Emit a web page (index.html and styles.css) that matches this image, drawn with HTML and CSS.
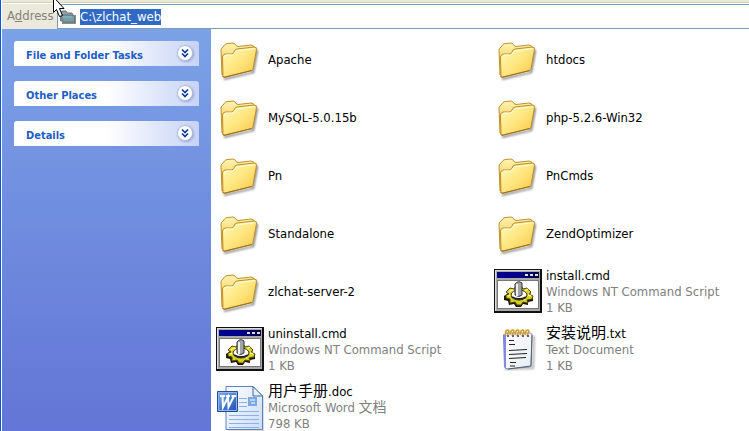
FILE: index.html
```html
<!DOCTYPE html>
<html lang="zh-CN">
<head>
<meta charset="utf-8">
<title>C:\zlchat_web</title>
<link rel="stylesheet" href="styles.css">
</head>
<body>
<svg class="defs" aria-hidden="true">
  <defs>
    <linearGradient id="g-front" x1="0" y1="0" x2="1" y2="1"><stop offset="0" stop-color="#fffbb8"/><stop offset=".5" stop-color="#ffe680"/><stop offset="1" stop-color="#f5c544"/></linearGradient>
    <linearGradient id="g-back" x1="0" y1="0" x2="0" y2="1"><stop offset="0" stop-color="#fff3ad"/><stop offset="1" stop-color="#e9bd45"/></linearGradient>
    <linearGradient id="g-word" x1="0" y1="0" x2="1" y2="1"><stop offset="0" stop-color="#7fb0f0"/><stop offset="1" stop-color="#1d4fb0"/></linearGradient>
    <linearGradient id="g-page" x1="0" y1="0" x2="1" y2="1"><stop offset="0" stop-color="#ffffff"/><stop offset="1" stop-color="#c9dcf5"/></linearGradient>
    <linearGradient id="g-note" x1="0" y1="0" x2="1" y2="1"><stop offset="0" stop-color="#ffffff"/><stop offset="1" stop-color="#e6edf2"/></linearGradient>
    <linearGradient id="g-title" x1="0" y1="0" x2="1" y2="0"><stop offset="0" stop-color="#00008c"/><stop offset=".55" stop-color="#000088"/><stop offset="1" stop-color="#00003c"/></linearGradient>
    <filter id="soft" x="-20%" y="-20%" width="140%" height="140%"><feGaussianBlur stdDeviation="1"/></filter>
  </defs>
  <symbol id="folder" viewBox="1 0 48 48">
    <path d="M9 44L39 37L43 15L41 12L37 36L9 42Z" fill="#444" opacity=".7" filter="url(#soft)"/>
    <path d="M7 39L6 14Q6 12 8 11L10 8.500Q11 7.500 13 7.500L18 7Q20 7 21 9.500L23 10.500L36 9Q39 9 39.500 12L38 32Z" fill="url(#g-back)" stroke="#c08f2c"/>
    <path d="M8 41L7.500 21Q7.500 19 10 18L17 18Q19 17 20 14L22 13L39 11Q42 11 41.500 13.500L38 33Q37.500 34 36.500 34.500L10 41Q8 41.500 8 40Z" fill="url(#g-front)" stroke="#bd8c26"/>
    <path d="M9 22Q9 20 11 19L18 19Q20 18 21 15L40 12.500" fill="none" stroke="#fffde0"/>
    <path d="M8.500 41.500L37 34.500" stroke="#9d7016"/>
  </symbol>
  <symbol id="cmd" viewBox="0 1 48 48">
    <path d="M0 2H48V46H0Z" fill="#111"/>
    <path d="M1 3H46V44H1Z" fill="#aaa"/>
    <path d="M1 3H46V4H2V44H1Z" fill="#ddd"/>
    <path d="M3 5H45V11H3Z" fill="url(#g-title)"/>
    <path d="M31 7h3v2h-3zM36 7h3v2h-3zM41 7h3v2h-3z" fill="#ddd"/>
    <path d="M3 13H45V42H3Z" fill="#777"/>
    <path d="M4 14H44V41H4Z" fill="#fff"/>
    <g transform="translate(0 -2)">
      <path d="M13 29l3-5 4 1 2-3h6l2 3 4-1 3 4-2 2 4 2v4l-5 1v3l-5-1-2 3h-5l-2-3-5 1-1-4-4-1v-4z" fill="#171700"/>
      <path d="M12 27l4-4 4 1 2-3h5l2 3 4-1 4 4-2 2 4 2-1 3-5 1 1 3-5-1-2 3h-4l-2-3-5 1v-4l-4-1v-3l3-1z" fill="#d8cf22" stroke="#514c00" stroke-width="1"/>
      <path d="M15 27l3-2 2 1M14 31l3-1M19 34l2-2M31 26l3-2M34 30l3 1M29 34l2 1" fill="none" stroke="#fff89a" stroke-width="1.500"/>
      <ellipse cx="25" cy="30" rx="8" ry="5" fill="#fff" stroke="#332f00"/>
      <path d="M21 19Q24 15 28 18V30Q25 33 21 30Z" fill="#a4a4a4" stroke="#333"/>
      <path d="M23 19V31" stroke="#eee" stroke-width="2"/>
      <path d="M18 32Q25 36 32 32" stroke="#222" stroke-width="2" fill="none"/>
    </g>
  </symbol>
  <symbol id="note" viewBox="1 0 48 48">
    <path d="M12 43L40 42L41 10" fill="none" stroke="#777" stroke-width="2" opacity=".6" filter="url(#soft)"/>
    <path d="M10 8L13 11V43L11 41Z" fill="#7278c8"/>
    <path d="M12 9Q12 7 14 7H37Q39 7 39 9L38 39Q38 41 36 41L15 43Q12 43 12 40Z" fill="url(#g-note)" stroke="#8890b4"/>
    <path d="M39 9L38 40L15 43" fill="none" stroke="#4f646c"/>
    <path d="M12 9V41" stroke="#8588dc" stroke-width="2"/>
    <path d="M12 9l1-4q2-2 3 0l-2 5M17 9l1-4q2-2 3 0l-2 5M22 9l1-4q2-2 3 0l-2 5M27 9l1-4q2-2 3 0l-2 5M32 9l1-4q2-2 3 0l-2 5" fill="none" stroke="#cf9b22" stroke-width="1.500"/>
    <path d="M14 10h2M19 10h2M24 10h2M29 10h2M34 10h2" stroke="#6a589a" stroke-width="2"/>
    <path d="M16 14.500H21M16 18.500H22M16 24.500L34 23.500M16 28.500L34 27.500M16 32.500L33 31.500M17 36.500H23M17 40H22" stroke="#222" stroke-width="1.200"/>
  </symbol>
  <symbol id="word" viewBox="0 0 48 48">
    <path d="M13 47H48V12" fill="none" stroke="#777" stroke-width="1" opacity=".5"/>
    <path d="M10 2.500H37L46.500 12V45.500H10Z" fill="url(#g-page)" stroke="#5b80c4"/>
    <path d="M37 2.500V12H46.500Z" fill="#e5f0ff" stroke="#4169ad"/>
    <path d="M13 31.500H43M13 35.500H43M13 39.500H43M13 43.500H43M23 14.500H31M23 18.500H31M23 22.500H31M23 27.500H43" stroke="#8eb0e2"/>
    <path d="M32 13H41V22H32Z" fill="#7ba9e6"/><path d="M34 15h5v2h-5zM35 18h4v2h-4z" fill="#bad4f6"/>
    <path d="M1.500 7.500H21.500V27.500H1.500Z" fill="url(#g-word)" stroke="#244c9b"/>
    <path d="M2.500 8.500H20.500V26.500H2.500Z" fill="none" stroke="#8fb6ef"/>
    <path d="M4 12H9M6.500 12L7 23L12 13L12.500 23L18 12M10 12H14M15.500 12H20" fill="none" stroke="#fff" stroke-width="2"/>
  </symbol>
  <symbol id="chevrons" viewBox="0 0 20 20">
    <circle cx="11" cy="11" r="8" fill="#7885b8" opacity=".6" filter="url(#soft)"/>
    <circle cx="10" cy="10" r="7.500" fill="#fff" stroke="#b4bcdf"/>
    <path d="M7 6.500L10 9.500L13 6.500M7 10.500L10 13.500L13 10.500" fill="none" stroke="#0c3b9c" stroke-width="1.700"/>
  </symbol>
</svg>

<div class="toolbar-edge"></div>
<header class="address-bar">
  <label class="address-label" for="address">A<u>d</u>dress</label>
  <div class="address-field">
    <svg class="address-icon" viewBox="0 0 16 16" aria-hidden="true">
      <path d="M2 14H15V6" fill="none" stroke="#666" stroke-width="1.500"/>
      <path d="M.5 12V4L2 2H6L7.500 4H12L13 6V12Z" fill="#8ca3ab" stroke="#777"/>
      <path d="M1 6H13L14.500 8V13H3Z" fill="#769fab" stroke="#6b7476"/>
      <path d="M3 8H12" stroke="#91bbc5"/>
    </svg>
    <input class="address-input" id="address" type="text" value="C:\zlchat_web" spellcheck="false">
  </div>
</header>

<div class="window">
  <nav class="sidebar">
    <button class="panel" type="button">File and Folder Tasks<svg class="chevron"><use href="#chevrons"/></svg></button>
    <button class="panel" type="button">Other Places<svg class="chevron"><use href="#chevrons"/></svg></button>
    <button class="panel" type="button">Details<svg class="chevron"><use href="#chevrons"/></svg></button>
  </nav>
  <main class="files">
    <div class="file"><svg class="icon"><use href="#folder"/></svg><div class="name">Apache</div></div>
    <div class="file"><svg class="icon"><use href="#folder"/></svg><div class="name">htdocs</div></div>
    <div class="file"><svg class="icon"><use href="#folder"/></svg><div class="name">MySQL-5.0.15b</div></div>
    <div class="file"><svg class="icon"><use href="#folder"/></svg><div class="name">php-5.2.6-Win32</div></div>
    <div class="file"><svg class="icon"><use href="#folder"/></svg><div class="name">Pn</div></div>
    <div class="file"><svg class="icon"><use href="#folder"/></svg><div class="name">PnCmds</div></div>
    <div class="file"><svg class="icon"><use href="#folder"/></svg><div class="name">Standalone</div></div>
    <div class="file"><svg class="icon"><use href="#folder"/></svg><div class="name">ZendOptimizer</div></div>
    <div class="file"><svg class="icon"><use href="#folder"/></svg><div class="name">zlchat-server-2</div></div>
    <div class="file"><svg class="icon"><use href="#cmd"/></svg><div><div class="name">install.cmd</div><div class="meta">Windows NT Command Script</div><div class="meta">1 KB</div></div></div>
    <div class="file"><svg class="icon"><use href="#cmd"/></svg><div><div class="name">uninstall.cmd</div><div class="meta">Windows NT Command Script</div><div class="meta">1 KB</div></div></div>
    <div class="file"><svg class="icon"><use href="#note"/></svg><div><div class="name"><span class="cjk">安装说明</span>.txt</div><div class="meta">Text Document</div><div class="meta">1 KB</div></div></div>
    <div class="file"><svg class="icon"><use href="#word"/></svg><div><div class="name"><span class="cjk">用户手册</span>.doc</div><div class="meta">Microsoft Word <span class="cjk">文档</span></div><div class="meta">798 KB</div></div></div>
  </main>
</div>
<svg class="pointer" viewBox="0 0 14 20" aria-hidden="true"><path d="M1.500 -4V12.500L4.500 9.500L7.500 16.500L10.500 15.500L7.500 8.500H12L1.500 -3Z" fill="#fff" stroke="#000"/></svg>
</body>
</html>
```
FILE: styles.css
```css
* { box-sizing: border-box; }

body {
  margin: 0;
  height: 100vh;
  display: flex;
  flex-direction: column;
  overflow: hidden;
  background: #fff;
  border-left: 1px solid #0855dd;
  font: 13px/16px "DejaVu Sans Condensed", "DejaVu Sans", "Noto Sans CJK SC", sans-serif;
  font-stretch: condensed;
  color: #000;
}

.defs { position: absolute; width: 0; height: 0; }

.toolbar-edge {
  flex: none;
  height: 4px;
  margin-left: 1px;
  background: #ece9d8;
  border-bottom: 1px solid #fff;
  box-shadow: inset 0 -1px #d4d0bd;
}

.address-bar {
  flex: none;
  display: flex;
  height: 25px;
  margin-left: 1px;
  background: #ebe8dc;
}

.address-label {
  width: 55px;
  padding: 4px 0 0 5px;
  color: #848279;
}

.address-field {
  flex: 1;
  display: flex;
  align-items: center;
  gap: 4px;
  padding-left: 2px;
  background: #fff;
  border: 1px solid #7f9db9;
  border-right: 0;
}

.address-icon { width: 16px; height: 16px; }

.address-input {
  field-sizing: content;
  height: 16px;
  padding: 0;
  border: 0;
  outline: 0;
  background: #316ac5;
  color: #fff;
  font: inherit;
}

.window {
  flex: 1;
  display: flex;
  min-height: 0;
  padding-left: 1px;
}

.sidebar {
  flex: none;
  display: flex;
  flex-direction: column;
  gap: 15px;
  width: 209px;
  padding: 12px;
  background: linear-gradient(#7ba2e7, #6375d6);
}

.panel {
  display: flex;
  align-items: center;
  justify-content: space-between;
  height: 25px;
  padding: 4px 4px 0 12px;
  border: 0;
  border-radius: 3px 3px 0 0;
  background: linear-gradient(90deg, #fff 50%, #c6d3f7);
  color: #215dc6;
  font: bold 11px/16px "DejaVu Sans Condensed", "DejaVu Sans", sans-serif;
  font-stretch: condensed;
}

.chevron { width: 20px; height: 20px; margin-bottom: 6px; }

.files {
  flex: 1;
  display: grid;
  grid-template-columns: 278px 1fr;
  grid-auto-rows: 58px;
  align-content: start;
  padding: 2px 0 0 5px;
}

.file {
  display: flex;
  align-items: center;
  gap: 4px;
  white-space: nowrap;
}

.icon { flex: none; width: 48px; height: 48px; }

.meta { color: #808080; }

.name, .meta { height: 16px; }

.cjk {
  font-family: "Noto Sans CJK SC", sans-serif;
  line-height: 0;
}

.name .cjk { font-size: 15px; }

.meta .cjk { font-size: 14px; }

.pointer {
  position: absolute;
  left: 52px;
  top: 0;
  width: 14px;
  height: 20px;
}
```
